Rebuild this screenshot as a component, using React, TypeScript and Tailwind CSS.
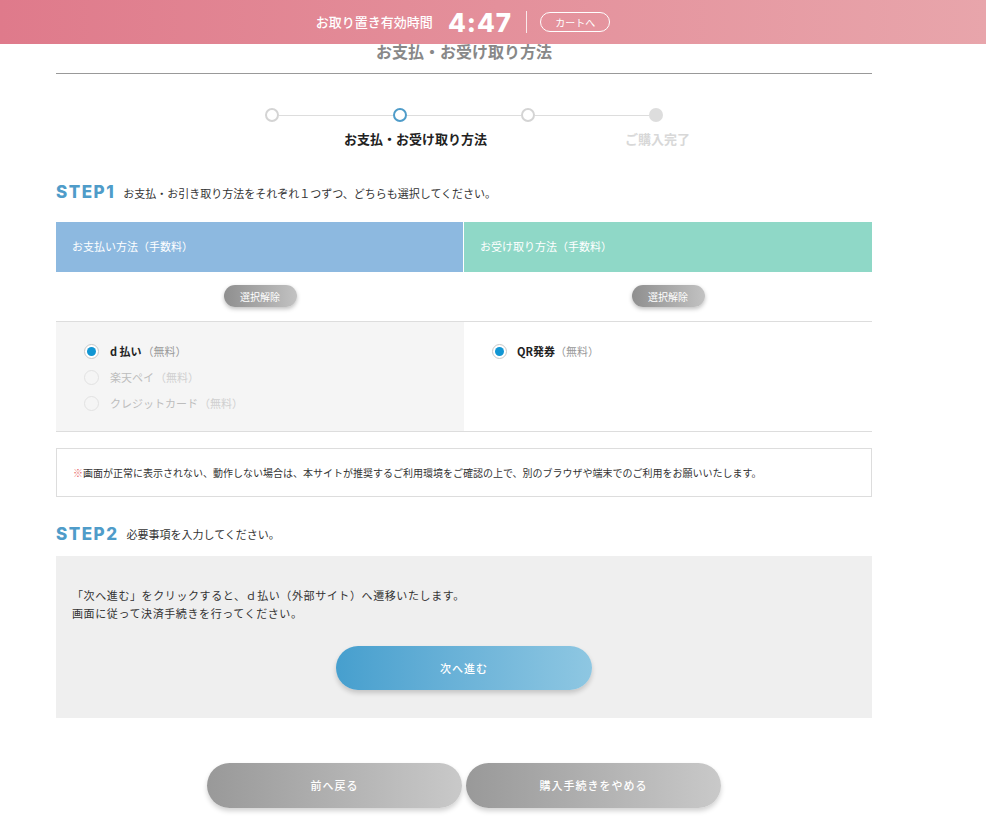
import React, { useState } from 'react';

const JP = { fontFamily: '"Noto Sans CJK JP", "Noto Sans", sans-serif' };
const HEAD = { fontFamily: 'Inter, "Noto Sans", sans-serif' };

const PAYMENTS = [
  { id: 'dpay', label: 'd 払い', enabled: true },
  { id: 'rakuten', label: '楽天ペイ', enabled: false },
  { id: 'card', label: 'クレジットカード', enabled: false },
];

function Radio({ checked, disabled }: { checked: boolean; disabled?: boolean }) {
  return (
    <span
      className={`flex h-[15px] w-[15px] items-center justify-center rounded-full border ${
        disabled ? 'border-[#e2e2e2] bg-transparent' : 'border-[#c8c8c8] bg-white'
      }`}
    >
      {checked && <span className="h-[9px] w-[9px] rounded-full bg-[#1296d3]" />}
    </span>
  );
}

function ClearButton() {
  return (
    <button className="h-[22px] w-[73px] rounded-full bg-gradient-to-r from-[#8f8f8f] to-[#c2c2c2] text-[10px] text-white shadow-[0_2px_4px_rgba(0,0,0,0.25)]">
      選択解除
    </button>
  );
}

function StepHeading({ n, text }: { n: number; text: string }) {
  return (
    <div className="flex items-center gap-[8px]">
      <span style={HEAD} className="text-[17px] font-extrabold tracking-[1.5px] text-[#4f9cc9]">
        STEP{n}
      </span>
      <span className="text-[11px] text-[#333]">{text}</span>
    </div>
  );
}

export default function App() {
  const [pay, setPay] = useState('dpay');

  return (
    <div style={JP} className="min-h-[829px] bg-white">
      {/* reservation timer bar */}
      <div className="flex h-[44px] items-center justify-center bg-gradient-to-r from-[#df7a8b] to-[#e8a5ab] pr-[60px] text-white">
        <span className="text-[13px] font-medium">お取り置き有効時間</span>
        <span style={HEAD} className="ml-[15px] text-[26px] font-extrabold tracking-[1px]">
          4:47
        </span>
        <span className="ml-[14px] h-[22px] w-px bg-white/80" />
        <button className="ml-[13px] flex h-[20px] w-[70px] items-center justify-center rounded-full border border-white text-[10px]">
          カートへ
        </button>
      </div>

      <div className="ml-[56px] w-[816px]">
        <div className="-mt-[3px] border-b border-[#999] pb-[12px] text-center text-[16px] font-bold leading-[20px] text-[#888]">
          お支払・お受け取り方法
        </div>

        {/* progress */}
        <div className="mt-[34px] flex items-center pl-[209px]">
          <span className="h-[14px] w-[14px] rounded-full border-2 border-[#d4d4d4] bg-white" />
          <span className="h-px w-[114px] bg-[#ddd]" />
          <span className="h-[14px] w-[14px] rounded-full border-2 border-[#4f9cc9] bg-white" />
          <span className="h-px w-[114px] bg-[#ddd]" />
          <span className="h-[14px] w-[14px] rounded-full border-2 border-[#d4d4d4] bg-white" />
          <span className="h-px w-[114px] bg-[#ddd]" />
          <span className="h-[14px] w-[14px] rounded-full bg-[#ddd]" />
        </div>
        <div className="mt-[9px] flex text-[13px] font-bold leading-[16px]">
          <span className="ml-[288px] text-[#222]">お支払・お受け取り方法</span>
          <span className="ml-[138px] text-[#d8d8d8]">ご購入完了</span>
        </div>

        <div className="mt-[33px]">
          <StepHeading n={1} text="お支払・お引き取り方法をそれぞれ１つずつ、どちらも選択してください。" />
        </div>

        {/* method table */}
        <div className="mt-[16px] grid grid-cols-2">
          <div className="flex h-[50px] items-center border-r border-white bg-[#8db9e0] pl-4 text-[11px] text-white">
            お支払い方法（手数料）
          </div>
          <div className="flex h-[50px] items-center bg-[#8fd8c7] pl-4 text-[11px] text-white">
            お受け取り方法（手数料）
          </div>
          <div className="flex h-[50px] items-center justify-center border-b border-[#ddd]">
            <ClearButton />
          </div>
          <div className="flex h-[50px] items-center justify-center border-b border-[#ddd]">
            <ClearButton />
          </div>
          <div className="flex h-[110px] flex-col gap-[11px] border-b border-[#ddd] bg-[#f5f5f5] pl-[28px] pt-[22px]">
            {PAYMENTS.map(p => (
              <label
                key={p.id}
                onClick={() => p.enabled && setPay(p.id)}
                className="flex items-center gap-[11px] text-[11px] leading-[15px]"
              >
                <Radio checked={pay === p.id} disabled={!p.enabled} />
                <span className={p.enabled ? 'font-bold text-[#222]' : 'text-[#bdbdbd]'}>{p.label}</span>
                <span className={`-ml-[10px] ${p.enabled ? 'text-[#999]' : 'text-[#d0d0d0]'}`}>（無料）</span>
              </label>
            ))}
          </div>
          <div className="h-[110px] border-b border-[#ddd] bg-white pl-[28px] pt-[22px]">
            <label className="flex items-center gap-[10px] text-[11px] leading-[15px]">
              <Radio checked />
              <span className="font-bold text-[#222]">QR発券</span>
              <span className="-ml-[10px] text-[#999]">（無料）</span>
            </label>
          </div>
        </div>

        <div className="mt-[16px] flex h-[49px] items-center border border-[#ddd] pl-4 text-[10px] text-[#333]">
          <span className="text-[#e86a6a]">※</span>
          画面が正常に表示されない、動作しない場合は、本サイトが推奨するご利用環境をご確認の上で、別のブラウザや端末でのご利用をお願いいたします。
        </div>

        <div className="mt-[25px]">
          <StepHeading n={2} text="必要事項を入力してください。" />
        </div>

        <div className="mt-[9px] h-[162px] bg-[#efefef] px-4 pt-[30px]">
          <p className="text-[11px] leading-[18px] tracking-[0.6px] text-[#333]">
            「次へ進む」をクリックすると、ｄ払い（外部サイト）へ遷移いたします。
            <br />
            画面に従って決済手続きを行ってください。
          </p>
          <div className="mt-[24px] flex justify-center">
            <button className="h-[44px] w-[256px] rounded-full bg-gradient-to-r from-[#469fce] to-[#8ec7e2] text-[11px] font-medium tracking-[1px] text-white shadow-[0_3px_5px_rgba(0,0,0,0.18)]">
              次へ進む
            </button>
          </div>
        </div>

        <div className="mt-[45px] flex justify-center gap-[4px]">
          <button className="h-[45px] w-[255px] rounded-full bg-gradient-to-r from-[#999] to-[#c9c9c9] text-[11px] font-medium tracking-[1px] text-white shadow-[0_3px_5px_rgba(0,0,0,0.18)]">
            前へ戻る
          </button>
          <button className="h-[45px] w-[255px] rounded-full bg-gradient-to-r from-[#999] to-[#c9c9c9] text-[11px] font-medium tracking-[1px] text-white shadow-[0_3px_5px_rgba(0,0,0,0.18)]">
            購入手続きをやめる
          </button>
        </div>
      </div>
    </div>
  );
}
